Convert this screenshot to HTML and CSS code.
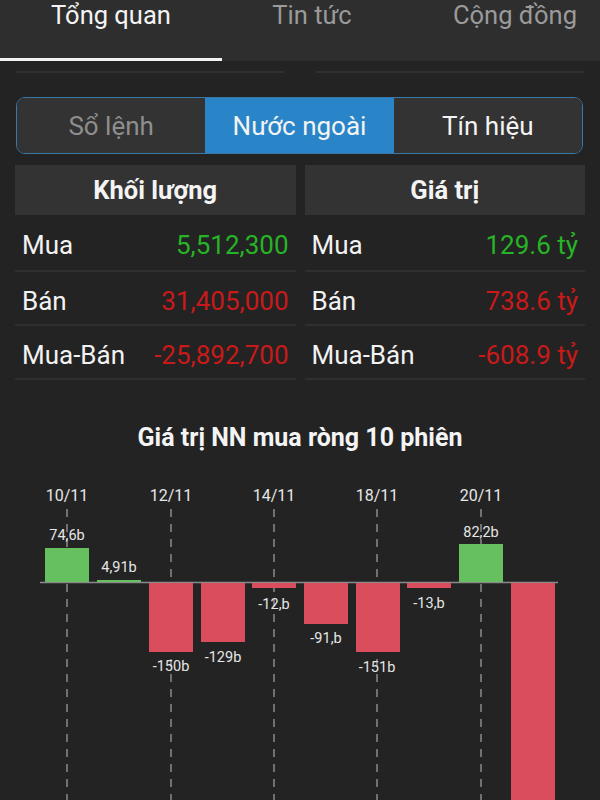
FILE: index.html
```html
<!DOCTYPE html>
<html lang="vi">
<head>
<meta charset="utf-8">
<title>Nước ngoài</title>
<link rel="stylesheet" href="styles.css">
</head>
<body>
<div class="page">
  <nav class="tabs">
    <div class="tab tab-1 active">Tổng quan</div>
    <div class="tab tab-2">Tin tức</div>
    <div class="tab tab-3">Cộng đồng</div>
  </nav>
  <div class="rules">
    <span class="rule"></span>
    <span class="rule"></span>
  </div>
  <div class="segmented">
    <div class="seg dim">Sổ lệnh</div>
    <div class="seg on">Nước ngoài</div>
    <div class="seg">Tín hiệu</div>
  </div>
  <div class="tables">
    <div class="col">
      <div class="head">Khối lượng</div>
      <div class="row"><span>Mua</span><span class="up">5,512,300</span></div>
      <div class="row"><span>Bán</span><span class="down">31,405,000</span></div>
      <div class="row"><span>Mua-Bán</span><span class="down">-25,892,700</span></div>
    </div>
    <div class="col">
      <div class="head">Giá trị</div>
      <div class="row"><span>Mua</span><span class="up">129.6 tỷ</span></div>
      <div class="row"><span>Bán</span><span class="down">738.6 tỷ</span></div>
      <div class="row"><span>Mua-Bán</span><span class="down">-608.9 tỷ</span></div>
    </div>
  </div>
  <h2 class="title">Giá trị NN mua ròng 10 phiên</h2>
  <svg class="chart" width="600" height="340" viewBox="0 460 600 340">
    <g class="grid">
      <line x1="67" y1="509" x2="67" y2="800"/>
      <line x1="171" y1="509" x2="171" y2="800"/>
      <line x1="274" y1="509" x2="274" y2="800"/>
      <line x1="377" y1="509" x2="377" y2="800"/>
      <line x1="481" y1="509" x2="481" y2="800"/>
    </g>
    <g class="dates">
      <text x="67" y="501">10/11</text>
      <text x="171" y="501">12/11</text>
      <text x="274" y="501">14/11</text>
      <text x="377" y="501">18/11</text>
      <text x="481" y="501">20/11</text>
    </g>
    <line class="zero" x1="40" y1="582.5" x2="558" y2="582.5"/>
    <g class="pos">
      <rect x="45" y="548" width="44" height="34"/>
      <rect x="97" y="580" width="44" height="2"/>
      <rect x="459" y="544" width="44" height="38"/>
    </g>
    <g class="neg">
      <rect x="149" y="583" width="44" height="69"/>
      <rect x="201" y="583" width="44" height="59"/>
      <rect x="252" y="583" width="44" height="5"/>
      <rect x="304" y="583" width="44" height="41"/>
      <rect x="356" y="583" width="44" height="69"/>
      <rect x="407" y="583" width="44" height="5"/>
      <rect x="511" y="583" width="44" height="230"/>
    </g>
    <g class="vals">
      <text x="67" y="540">74,6b</text>
      <text x="119" y="572">4,91b</text>
      <text x="171" y="671">-150b</text>
      <text x="223" y="662">-129b</text>
      <text x="274" y="609">-12,b</text>
      <text x="326" y="643">-91,b</text>
      <text x="377" y="672">-151b</text>
      <text x="429" y="608">-13,b</text>
      <text x="481" y="537">82,2b</text>
    </g>
  </svg>
</div>
</body>
</html>
```
FILE: styles.css
```css
* { box-sizing: border-box; }
html, body {
  margin: 0;
  padding: 0;
  background: #232323;
}
body {
  font-family: Roboto, "Noto Sans", "DejaVu Sans", sans-serif;
  color: #f2f2f2;
  width: 600px;
  height: 800px;
  overflow: hidden;
}
.page {
  display: flex;
  flex-direction: column;
}
.tabs {
  display: flex;
  height: 61px;
  background: #2e2e2e;
  overflow: hidden;
  white-space: nowrap;
}
.tab {
  flex: none;
  font-size: 25.5px;
  color: #9a9a9a;
  text-align: center;
  line-height: 31px;
  border-bottom: 3px solid transparent;
  height: 61px;
}
.tab-1 { width: 222px; }
.tab-2 { width: 180px; }
.tab-3 { width: 226px; }
.tab.active {
  color: #f4f4f4;
  border-bottom: 3px solid #f2f2f2;
}
.rules {
  display: flex;
  justify-content: space-between;
  padding: 10px 16px 0 16px;
  height: 36px;
}
.rule {
  width: 268px;
  height: 2px;
  background: #303030;
}
.segmented {
  display: flex;
  margin: 0 17px 0 16px;
  height: 57px;
  border: 1px solid #3a78a8;
  border-radius: 9px;
  overflow: hidden;
}
.seg {
  flex: 1;
  display: flex;
  align-items: center;
  justify-content: center;
  background: #333333;
  font-size: 26px;
  color: #f4f4f4;
}
.seg.dim { color: #8e8e8e; }
.seg.on { background: #2a85c8; color: #f4f4f4; }
.tables {
  display: flex;
  gap: 9px;
  padding: 11px 15px 0 15px;
}
.col {
  flex: 1;
  display: flex;
  flex-direction: column;
}
.head {
  height: 50px;
  background: #333333;
  display: flex;
  align-items: center;
  justify-content: center;
  font-size: 25.5px;
  font-weight: bold;
  color: #f4f4f4;
}
.row {
  height: 54px;
  display: flex;
  align-items: center;
  justify-content: space-between;
  padding: 5px 7px 0 7px;
  font-size: 26px;
  border-bottom: 2px solid #2f2f2f;
}
.row:nth-child(2) { height: 57px; }
.up { color: #27b327; }
.down { color: #c81a1a; }
.title {
  margin: 44px 0 0 0;
  text-align: center;
  font-size: 25px;
  font-weight: bold;
  color: #f4f4f4;
  line-height: 28px;
}
.chart {
  display: block;
  margin-top: 8px;
}
.grid line {
  stroke: #8a8a8a;
  stroke-width: 1.5;
  stroke-dasharray: 8 7;
}
.dates text {
  font-family: Roboto, sans-serif;
  font-size: 16px;
  fill: #e6e6e6;
  text-anchor: middle;
}
.zero { stroke: #8a8a8a; stroke-width: 1.5; }
.pos rect { fill: #66c060; }
.neg rect { fill: #d94d5c; }
.vals text {
  font-family: Roboto, sans-serif;
  font-size: 14.5px;
  fill: #e6e6e6;
  text-anchor: middle;
}
```
